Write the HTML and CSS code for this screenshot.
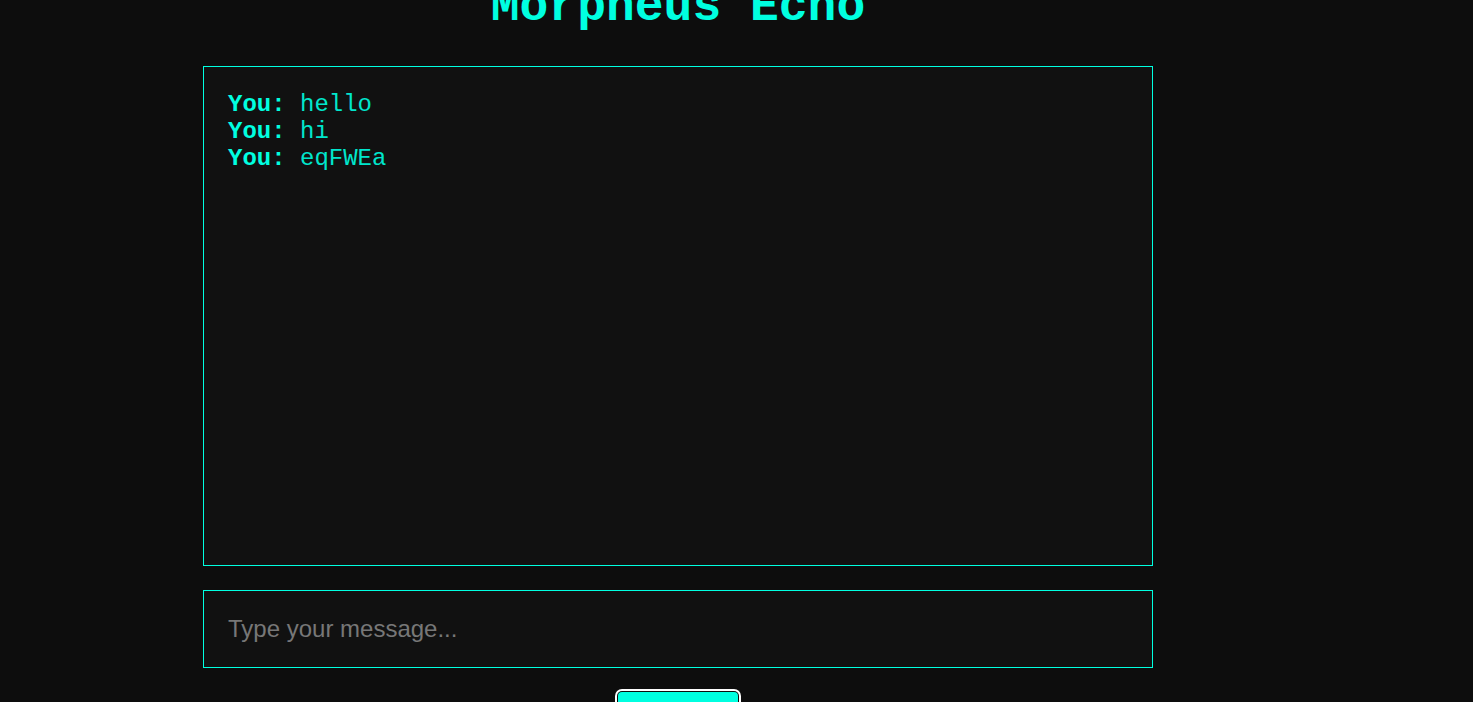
FILE: index.html
```html
<!DOCTYPE html>
<html lang="en">
<head>
<meta charset="utf-8">
<title>Morpheus Echo</title>
<link rel="stylesheet" href="styles.css">
</head>
<body>
<div class="app">
  <h1 class="title">Morpheus Echo</h1>
  <div class="chat">
    <div class="msg"><span class="who">You:</span> hello</div>
    <div class="msg"><span class="who">You:</span> hi</div>
    <div class="msg"><span class="who">You:</span> eqFWEa</div>
  </div>
  <input class="input" type="text" placeholder="Type your message...">
  <div class="actions">
    <button class="send">Send</button>
  </div>
</div>
</body>
</html>
```

FILE: styles.css
```css
html, body {
  margin: 0;
  padding: 0;
  background: #0d0d0d;
  overflow: hidden;
}
.app {
  width: 950px;
  margin-left: 203px;
  display: flex;
  flex-direction: column;
}
.title {
  margin: -20px 0 32px;
  text-align: center;
  font-family: "Courier New", "Nimbus Mono PS", "FreeMono", "Liberation Mono", monospace;
  font-size: 48px;
  font-weight: bold;
  line-height: normal;
  color: #00ffe0;
}
.chat {
  box-sizing: border-box;
  height: 500px;
  border: 1px solid #00ffe0;
  background: #111111;
  padding: 24px;
  font-family: "Courier New", "Nimbus Mono PS", "FreeMono", "Liberation Mono", monospace;
  font-size: 24px;
  line-height: normal;
  color: #00e6cc;
}
.who {
  font-weight: bold;
  color: #00ffe0;
}
.input {
  box-sizing: border-box;
  margin-top: 24px;
  width: 950px;
  height: 78px;
  padding: 0 24px;
  border: 1px solid #00ffe0;
  background: #111111;
  color: #00ffe0;
  font-family: "Liberation Sans", Arial, sans-serif;
  font-size: 24px;
  outline: none;
}
.input::placeholder {
  color: #777777;
}
.actions {
  display: flex;
  justify-content: center;
  margin-top: 24px;
}
.send {
  width: 120px;
  height: 48px;
  border: none;
  border-radius: 4px;
  background: #00ffe0;
  color: #0d0d0d;
  font-family: "Courier New", "Liberation Mono", monospace;
  font-size: 20px;
  font-weight: bold;
  box-shadow: 0 0 0 1px #0d0d0d, 0 0 0 3px #ffffff;
}
```
